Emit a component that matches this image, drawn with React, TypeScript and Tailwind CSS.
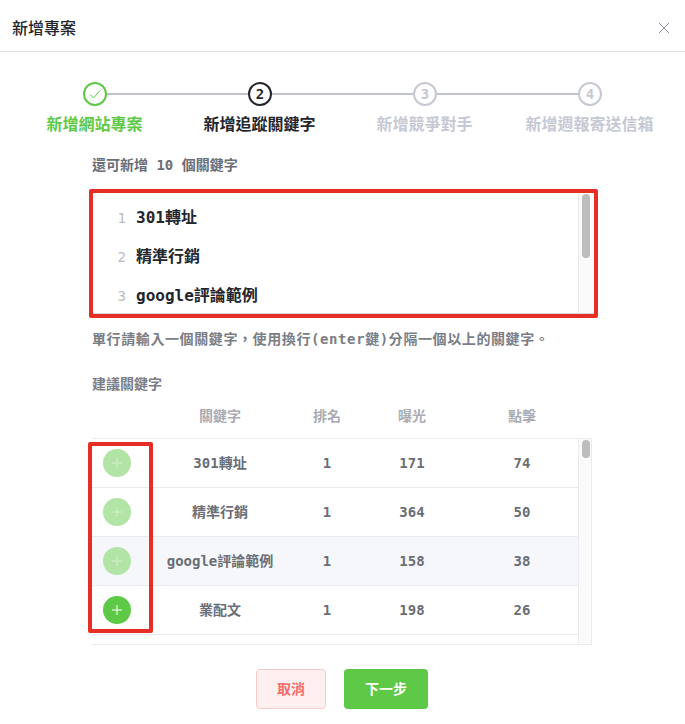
const cjk = "font-['Inter','Noto_Sans_CJK_TC',sans-serif]";

const steps = [
  { label: "新增網站專案", state: "done" },
  { label: "新增追蹤關鍵字", state: "active" },
  { label: "新增競爭對手", state: "todo" },
  { label: "新增週報寄送信箱", state: "todo" },
];

const keywords = ["301轉址", "精準行銷", "google評論範例"];

const rows = [
  { name: "301轉址", rank: 1, views: 171, clicks: 74, added: true },
  { name: "精準行銷", rank: 1, views: 364, clicks: 50, added: true },
  { name: "google評論範例", rank: 1, views: 158, clicks: 38, added: true, hover: true },
  { name: "業配文", rank: 1, views: 198, clicks: 26, added: false },
];

const StepDot = ({ n, state }: { n: number; state: string }) => {
  if (state === "done") {
    return (
      <div className="w-6 h-6 shrink-0 rounded-full border-2 border-[#5ec947] flex items-center justify-center">
        <svg width="14" height="14" viewBox="0 0 14 14" fill="none" stroke="#5ec947" strokeWidth="1">
          <path d="M2 7.5 L5.5 11 L12 3.5" />
        </svg>
      </div>
    );
  }
  return (
    <div
      className={
        state === "active"
          ? "w-6 h-6 shrink-0 rounded-full border-2 border-[#23262d] flex items-center justify-center text-sm font-bold text-[#23262d] font-['DejaVu_Sans_Mono',monospace]"
          : "w-6 h-6 shrink-0 rounded-full border-2 border-[#c6c9d3] flex items-center justify-center text-sm font-bold text-[#c6c9d3] font-['DejaVu_Sans_Mono',monospace]"
      }
    >
      {n}
    </div>
  );
};

const PlusButton = ({ faded }: { faded: boolean }) => (
  <div
    className={
      faded
        ? "w-7 h-7 rounded-full bg-[#b2e4a5] flex items-center justify-center"
        : "w-7 h-7 rounded-full bg-[#5ec947] flex items-center justify-center"
    }
  >
    <svg width="12" height="12" viewBox="0 0 12 12" stroke={faded ? "#d3f0cb" : "#ffffff"} strokeWidth="1">
      <path d="M6 1 V11 M1 6 H11" />
    </svg>
  </div>
);

export default function App() {
  return (
    <div className={`w-[685px] h-[724px] overflow-hidden bg-white ${cjk}`}>
      <div className="h-[52px] pl-3 pr-[15px] pt-1 flex items-center justify-between border-b border-[#dcdde0]">
        <h1 className="text-base font-medium text-[#23262d]">新增專案</h1>
        <svg width="12" height="12" viewBox="0 0 12 12" stroke="#8b8e96" strokeWidth="1">
          <path d="M1 1 L11 11 M11 1 L1 11" />
        </svg>
      </div>

      <div className="pt-[30px]">
        <div className="flex items-center px-[83px]">
          {steps.map((s, i) => (
            <div key={s.label} className={i < 3 ? "flex items-center flex-1" : "flex items-center"}>
              <StepDot n={i + 1} state={s.state} />
              {i < 3 && <div className="h-[2px] flex-1 bg-[#c0c3cf]" />}
            </div>
          ))}
        </div>
        <div className="grid grid-cols-4 w-[660px] ml-[12px] mt-[6px]">
          {steps.map((s) => (
            <div
              key={s.label}
              className={
                s.state === "done"
                  ? "text-center text-base leading-6 font-bold text-[#5ec947] whitespace-nowrap"
                  : s.state === "active"
                    ? "text-center text-base leading-6 font-bold text-[#23262d] whitespace-nowrap"
                    : "text-center text-base leading-6 font-bold text-[#c6c9d3] whitespace-nowrap"
              }
            >
              {s.label}
            </div>
          ))}
        </div>
      </div>

      <div className="ml-[92px] w-[502px]">
        <p className="mt-[19px] text-sm leading-5 font-bold text-[#6b6e76] font-['DejaVu_Sans_Mono','Noto_Sans_CJK_TC',monospace] whitespace-pre">
          還可新增 10 個關鍵字
        </p>

        <div className="relative mt-[14px] h-[126px] border-b-2 border-[#d8d8d8] flex">
          <div className="flex-1 pt-[9px] overflow-hidden">
            {keywords.map((k, i) => (
              <div key={k} className="h-[39px] flex items-center">
                <span className="w-[34px] text-right text-sm text-[#b9bbc2] font-['DejaVu_Sans_Mono',monospace]">{i + 1}</span>
                <span className="ml-[10px] text-base font-bold text-[#23262d] font-['DejaVu_Sans_Mono','Noto_Sans_CJK_TC',monospace]">{k}</span>
              </div>
            ))}
          </div>
          <div className="w-[16px] border-l border-[#e8e8e8] bg-[#fafafa] pt-[5px] pl-[3px]">
            <div className="w-2 h-[64px] rounded-full bg-[#bdbdbd]" />
          </div>
          {/* red mark from the screenshot */}
          <div className="absolute -left-[3px] top-0 w-[509px] h-[129px] border-[4px] border-[#e62e24] rounded-[2px]" />
        </div>

        <p className="mt-[14px] text-sm leading-5 tracking-[0.6px] font-bold text-[#7b7e85] font-['DejaVu_Sans_Mono','Noto_Sans_CJK_TC',monospace] whitespace-nowrap">
          {"單行請輸入一個關鍵字\uFF0C使用換行(enter鍵)分隔一個以上的關鍵字。"}
        </p>
        <p className="mt-[25px] text-sm leading-5 font-bold text-[#7b7e85]">建議關鍵字</p>

        <div className="flex h-[22px] mt-[11px] items-center text-sm font-bold text-[#a9acb3] text-center">
          <div className="w-[50px]" />
          <div className="w-[156px]">關鍵字</div>
          <div className="w-[58px]">排名</div>
          <div className="w-[112px]">曝光</div>
          <div className="w-[108px]">點擊</div>
        </div>

        <div className="relative mt-[11px] w-[500px] h-[207px] border-t border-b border-[#e9ebf1] flex">
          <div className="flex-1">
            {rows.map((r) => (
              <div
                key={r.name}
                className={
                  r.hover
                    ? "h-[49px] flex items-center border-b border-[#e9ebf1] bg-[#f5f7fa] text-sm font-bold text-[#6b6e76] text-center font-['DejaVu_Sans_Mono','Noto_Sans_CJK_TC',monospace]"
                    : "h-[49px] flex items-center border-b border-[#e9ebf1] text-sm font-bold text-[#6b6e76] text-center font-['DejaVu_Sans_Mono','Noto_Sans_CJK_TC',monospace]"
                }
              >
                <div className="w-[50px] flex justify-center">
                  <PlusButton faded={r.added} />
                </div>
                <div className="w-[156px] whitespace-nowrap">{r.name}</div>
                <div className="w-[58px]">{r.rank}</div>
                <div className="w-[112px]">{r.views}</div>
                <div className="w-[108px]">{r.clicks}</div>
              </div>
            ))}
          </div>
          <div className="w-[14px] border-l border-r border-[#e9ebf1] bg-[#fafafa] pt-[1px] pl-[3px]">
            <div className="w-2 h-[18px] rounded-full bg-[#bdbdbd]" />
          </div>
          {/* red mark from the screenshot */}
          <div className="absolute -left-[4px] top-[3px] w-[65px] h-[191px] border-[4px] border-[#e62e24] rounded-[2px]" />
        </div>
      </div>

      <div className="mt-[24px] pr-[1px] flex justify-center gap-[18px]">
        <button className="w-[70px] h-10 rounded border border-[#f9c9c9] bg-[#fef0f0] text-sm font-bold text-[#f56c6c]">取消</button>
        <button className="w-[84px] h-10 rounded bg-[#5ec947] text-sm font-bold text-white">下一步</button>
      </div>
    </div>
  );
}
